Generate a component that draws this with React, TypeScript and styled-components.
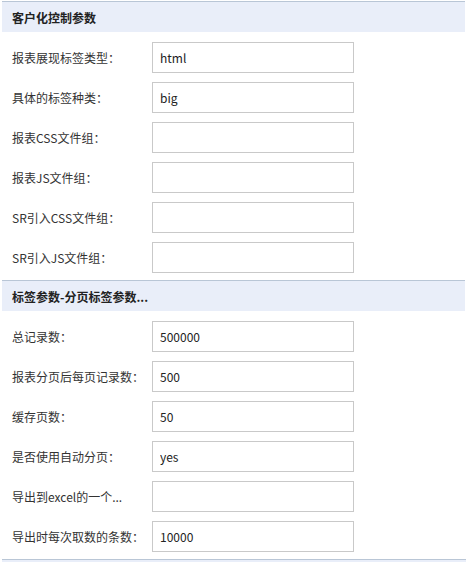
import * as React from 'react'
import styled, { createGlobalStyle } from 'styled-components'

const GlobalStyle = createGlobalStyle`
    body {
        margin: 0;
        background: #fff;
        font-family: "Microsoft YaHei", "Noto Sans CJK SC", "Noto Sans", sans-serif;
    }
`

type Field = {
    label: string
    value: string
}

type Group = {
    title: string
    fields: Field[]
}

const groups: Group[] = [
    {
        title: '客户化控制参数',
        fields: [
            { label: '报表展现标签类型：', value: 'html' },
            { label: '具体的标签种类：', value: 'big' },
            { label: '报表CSS文件组：', value: '' },
            { label: '报表JS文件组：', value: '' },
            { label: 'SR引入CSS文件组：', value: '' },
            { label: 'SR引入JS文件组：', value: '' },
        ],
    },
    {
        title: '标签参数-分页标签参数...',
        fields: [
            { label: '总记录数：', value: '500000' },
            { label: '报表分页后每页记录数：', value: '500' },
            { label: '缓存页数：', value: '50' },
            { label: '是否使用自动分页：', value: 'yes' },
            { label: '导出到excel的一个...', value: '' },
            { label: '导出时每次取数的条数：', value: '10000' },
        ],
    },
]

const Page = styled.div`
    width: 466px;
    padding-top: 1px;
`

const Section = styled.section`
    display: flex;
    flex-direction: column;
`

const SectionHeader = styled.div`
    height: 30px;
    margin: 0 1px 0 2px;
    border-top: 1px solid #b9c6d6;
    background-color: #e9eef9;
    display: flex;
    align-items: center;
    padding-left: 10px;
    font-size: 12px;
    font-weight: bold;
    color: #222;
`

const FieldList = styled.div`
    display: flex;
    flex-direction: column;
    gap: 9px;
    padding: 10px 0 7px;
`

const FieldRow = styled.div`
    display: flex;
    align-items: center;
    height: 31px;
`

const FieldLabel = styled.label`
    flex: 0 0 152px;
    padding-left: 12px;
    box-sizing: border-box;
    font-size: 12px;
    color: #333;
    white-space: nowrap;
`

const FieldInput = styled.input`
    width: 202px;
    height: 31px;
    box-sizing: border-box;
    border: 1px solid #c9c9c9;
    padding: 0 7px;
    margin: 0;
    font-family: "Microsoft YaHei", "Noto Sans CJK SC", "Noto Sans", sans-serif;
    font-size: 12px;
    color: #222;
    background: #fff;
    outline: none;
`

const Closing = styled.div`
    height: 2px;
    margin: 0 0 0 2px;
    border-top: 1px solid #b9c6d6;
    background-color: #e9eef9;
`

export default function App() {
    return (
        <>
            <GlobalStyle />
            <Page>
                {groups.map(group => (
                    <Section key={group.title}>
                        <SectionHeader>{group.title}</SectionHeader>
                        <FieldList>
                            {group.fields.map(field => (
                                <FieldRow key={field.label}>
                                    <FieldLabel>{field.label}</FieldLabel>
                                    <FieldInput defaultValue={field.value} readOnly />
                                </FieldRow>
                            ))}
                        </FieldList>
                    </Section>
                ))}
                <Closing />
            </Page>
        </>
    )
}
